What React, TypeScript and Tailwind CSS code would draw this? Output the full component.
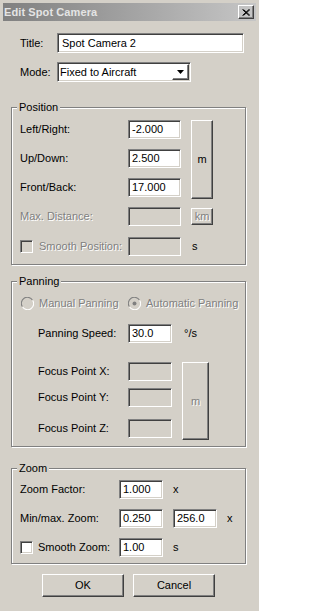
import React from "react";

const sunken =
  "border border-t-[#808080] border-l-[#808080] border-b-white border-r-white shadow-[inset_1px_1px_0_#404040,inset_-1px_-1px_0_#d4d0c8]";
const raised =
  "border border-t-white border-l-white border-b-[#404040] border-r-[#404040] shadow-[inset_-1px_-1px_0_#808080]";
const dim = "text-[#808080] [text-shadow:1px_1px_0_#fff]";

type FieldProps = { value?: string; className: string; off?: boolean };

const Field = ({ value, className, off }: FieldProps) => (
  <div
    className={`${sunken} ${className} ${off ? "bg-[#d4d0c8]" : "bg-white"} flex items-center px-[3px] shrink-0`}
  >
    {value}
  </div>
);

const Btn = ({ children, className, off }: { children: React.ReactNode; className: string; off?: boolean }) => (
  <div className={`${raised} ${className} ${off ? dim : ""} flex items-center justify-center shrink-0 bg-[#d4d0c8]`}>
    {children}
  </div>
);

const Check = ({ off }: { off?: boolean }) => (
  <div className={`${sunken} w-[13px] h-[13px] shrink-0 ${off ? "bg-[#d4d0c8]" : "bg-white"}`} />
);

const Radio = ({ dot }: { dot?: boolean }) => (
  <svg width="13" height="13" viewBox="0 0 12 12" className="shrink-0">
    <path d="M10.5 2.8 A5.2 5.2 0 0 0 1.2 8.8" fill="none" stroke="#808080" strokeWidth="1" />
    <path d="M1.5 9.2 A5.2 5.2 0 0 0 10.8 3.2" fill="none" stroke="#ffffff" strokeWidth="1" />
    <circle cx="6" cy="6" r="4.4" fill="#d4d0c8" />
    {dot && <circle cx="6" cy="6" r="1.8" fill="#808080" />}
  </svg>
);

const Group = ({ label, className, children }: { label: string; className: string; children: React.ReactNode }) => (
  <div
    className={`relative w-[235px] border border-[#808080] shadow-[inset_1px_1px_0_#fff,1px_1px_0_#fff] ${className}`}
  >
    <span className="absolute -top-[8px] left-[5px] px-[2px] bg-[#d4d0c8] leading-[14px]">{label}</span>
    {children}
  </div>
);

export default function App() {
  return (
    <div
      className="w-[259px] h-[611px] bg-[#d4d0c8] pt-[3px] px-[3px] text-[11px] text-black leading-[13px] overflow-hidden"
      style={{ fontFamily: '"Liberation Sans", Arial, sans-serif' }}
    >
      {/* title bar */}
      <div className="h-[18px] flex items-center justify-between pl-[1px] pr-[2px] bg-gradient-to-r from-[#808080] to-[#c6c6c6]">
        <span className="font-bold text-[#e4e4e4] tracking-[0.1px]">Edit Spot Camera</span>
        <div className={`${raised} w-[16px] h-[14px] flex items-center justify-center`}>
          <svg width="8" height="7" viewBox="0 0 8 7">
            <path d="M0.5 0.5 L7 6.5 M1.5 0.5 L8 6.5 M7 0.5 L0.5 6.5 M8 0.5 L1.5 6.5" stroke="#000" strokeWidth="1" />
          </svg>
        </div>
      </div>

      <div className="pl-[8px]">
        {/* title */}
        <div className="flex items-center mt-[12px] pl-[9px]">
          <span className="w-[37px]">Title:</span>
          <Field value="Spot Camera 2" className="w-[187px] h-[20px] pl-[4px]" />
        </div>
        {/* mode */}
        <div className="flex items-center mt-[9px] pl-[9px]">
          <span className="w-[37px]">Mode:</span>
          <div className={`${sunken} w-[134px] h-[20px] bg-white flex items-center justify-between pl-[2px] pr-[1px]`}>
            <span>Fixed to Aircraft</span>
            <div className={`${raised} w-[17px] h-[16px] flex items-center justify-center`}>
              <svg width="7" height="4" viewBox="0 0 7 4">
                <path d="M0 0 H7 L3.5 4 Z" fill="#000" />
              </svg>
            </div>
          </div>
        </div>

        {/* position */}
        <Group label="Position" className="mt-[25px] pt-[12px] pl-[8px] pb-[8px]">
          <div className="flex items-start">
            <div className="flex flex-col gap-[10px]">
              <div className="flex items-center h-[19px]">
                <span className="w-[108px]">Left/Right:</span>
                <Field value="-2.000" className="w-[53px] h-[19px]" />
              </div>
              <div className="flex items-center h-[19px]">
                <span className="w-[108px]">Up/Down:</span>
                <Field value="2.500" className="w-[53px] h-[19px]" />
              </div>
              <div className="flex items-center h-[19px]">
                <span className="w-[108px]">Front/Back:</span>
                <Field value="17.000" className="w-[53px] h-[19px]" />
              </div>
            </div>
            <Btn className="ml-[10px] w-[22px] h-[79px]">m</Btn>
          </div>
          <div className="flex items-center h-[19px] mt-[8px]">
            <span className={`w-[108px] ${dim}`}>Max. Distance:</span>
            <Field off className="w-[53px] h-[19px]" />
            <Btn off className="ml-[10px] w-[22px] h-[17px]">km</Btn>
          </div>
          <div className="flex items-center h-[19px] mt-[11px]">
            <div className="w-[108px] flex items-center gap-[6px]">
              <Check off />
              <span className={dim}>Smooth Position:</span>
            </div>
            <Field off className="w-[53px] h-[19px]" />
            <span className="ml-[11px]">s</span>
          </div>
        </Group>

        {/* panning */}
        <Group label="Panning" className="mt-[16px] pt-[15px] pl-[9px] pb-[6px]">
          <div className="flex items-center h-[13px]">
            <div className="w-[107px] flex items-center gap-[5px]">
              <Radio />
              <span className={dim}>Manual Panning</span>
            </div>
            <div className="flex items-center gap-[5px]">
              <Radio dot />
              <span className={dim}>Automatic Panning</span>
            </div>
          </div>
          <div className="flex items-center h-[19px] mt-[14px] pl-[17px]">
            <span className="w-[90px]">Panning Speed:</span>
            <Field value="30.0" className="w-[44px] h-[19px]" />
            <span className="ml-[12px]">°/s</span>
          </div>
          <div className="flex items-start mt-[19px] pl-[17px]">
            <div className="flex flex-col">
              <div className="flex items-center h-[19px]">
                <span className="w-[90px]">Focus Point X:</span>
                <Field off className="w-[44px] h-[19px]" />
              </div>
              <div className="flex items-center h-[19px] mt-[7px]">
                <span className="w-[90px]">Focus Point Y:</span>
                <Field off className="w-[44px] h-[19px]" />
              </div>
              <div className="flex items-center h-[19px] mt-[12px]">
                <span className="w-[90px]">Focus Point Z:</span>
                <Field off className="w-[44px] h-[19px]" />
              </div>
            </div>
            <Btn off className="ml-[10px] w-[27px] h-[78px]">m</Btn>
          </div>
        </Group>

        {/* zoom */}
        <Group label="Zoom" className="mt-[21px] pt-[11px] pl-[8px] pb-[6px]">
          <div className="flex items-center h-[19px]">
            <span className="w-[99px]">Zoom Factor:</span>
            <Field value="1.000" className="w-[44px] h-[19px]" />
            <span className="ml-[10px]">x</span>
          </div>
          <div className="flex items-center h-[19px] mt-[10px]">
            <span className="w-[99px]">Min/max. Zoom:</span>
            <Field value="0.250" className="w-[44px] h-[19px]" />
            <Field value="256.0" className="ml-[10px] w-[44px] h-[19px]" />
            <span className="ml-[10px]">x</span>
          </div>
          <div className="flex items-center h-[19px] mt-[10px]">
            <div className="w-[99px] flex items-center gap-[5px]">
              <Check />
              <span>Smooth Zoom:</span>
            </div>
            <Field value="1.00" className="w-[44px] h-[19px]" />
            <span className="ml-[10px]">s</span>
          </div>
        </Group>

        {/* buttons */}
        <div className="flex gap-[9px] mt-[10px] pl-[31px]">
          <Btn className="w-[82px] h-[23px]">OK</Btn>
          <Btn className="w-[82px] h-[23px]">Cancel</Btn>
        </div>
      </div>
    </div>
  );
}
